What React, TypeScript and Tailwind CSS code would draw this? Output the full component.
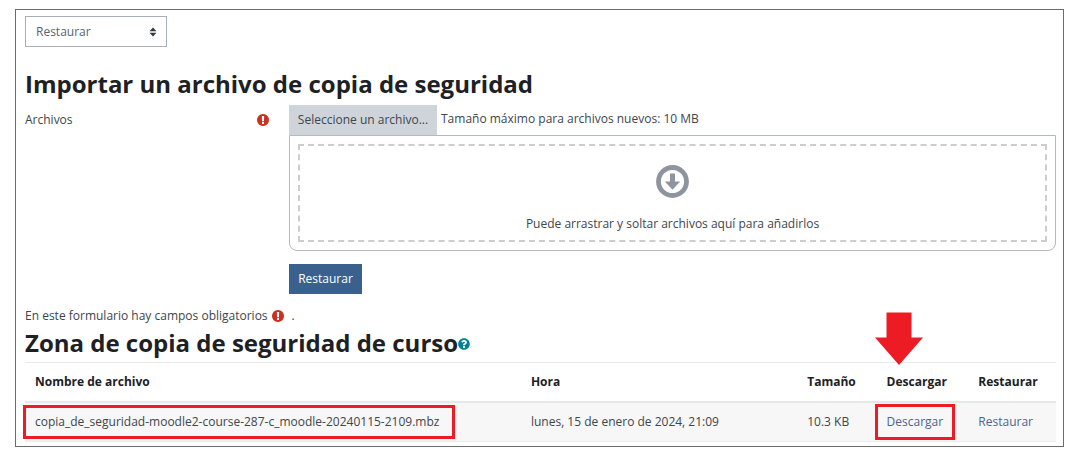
import { useState } from "react";
import { FaQuestionCircle } from "react-icons/fa";

interface BackupFile {
  name: string;
  time: string;
  size: string;
}

const files: BackupFile[] = [
  {
    name: "copia_de_seguridad-moodle2-course-287-c_moodle-20240115-2109.mbz",
    time: "lunes, 15 de enero de 2024, 21:09",
    size: "10.3 KB"
  }
];

function SortIcon() {
  return (
    <svg viewBox="0 0 8 10" className="pointer-events-none absolute right-2.5 top-1/2 h-2.5 w-2 -translate-y-1/2 fill-[#343a40]">
      <path d="M4 .5 7.500 4.200h-7zM4 9.500.5 5.800h7z" />
    </svg>
  );
}

function RequiredIcon() {
  return (
    <svg viewBox="0 128 1536 1536" className="size-3 shrink-0 fill-[#ca3120]">
      <path d="M768 128q209 0 385.5 103t279.5 279.5 103 385.5-103 385.5-279.5 279.5-385.5 103-385.5-103-279.5-279.5-103-385.5 103-385.5 279.5-279.5 385.5-103zm128 1247v-190q0-14-9-23.5t-22-9.5h-192q-13 0-23 10t-10 23v190q0 13 10 23t23 10h192q13 0 22-9.5t9-23.5zm-2-344l18-621q0-12-10-18-10-8-24-8h-220q-14 0-24 8-10 6-10 18l17 621q0 10 10 17.500t24 7.500h185q14 0 23.500-7.500t10.500-17.500z" />
    </svg>
  );
}

function DropIcon() {
  return (
    <svg viewBox="0 0 33 33" className="size-[33px]">
      <circle cx="16.5" cy="16.5" r="14" fill="none" stroke="#8f959e" strokeWidth="4.8" />
      <path d="M14 8.600h5v8h5.200L16.500 24.700l-7.700-8.100H14z" fill="#8f959e" />
    </svg>
  );
}

function ArrowDown() {
  return (
    <svg viewBox="0 0 48 53" className="absolute -top-[60px] -left-3 h-[53px] w-12 fill-[#ed1c24]">
      <path d="M11.500 0.500h25v25H48L24 53 0 25.500h11.500z" />
    </svg>
  );
}

export default function App() {
  const [action, setAction] = useState("restore");

  return (
    <div className="bg-white pt-[9px] pr-4 pb-[5px] pl-[15px] font-['Open_Sans',sans-serif] text-[12px] leading-5 text-[#40464c]">
      <main className="border border-[#6b6b6b] pt-1.5 pr-[7px] pb-1 pl-[9px]">
        <div className="relative w-[142px]">
          <select
            aria-label="Acción"
            value={action}
            onChange={(e) => setAction(e.target.value)}
            className="block h-[31px] w-full appearance-none border border-[#a9afb8] bg-white px-2.5 text-[#5c636a]"
          >
            <option value="restore">Restaurar</option>
          </select>
          <SortIcon />
        </div>

        <h2 className="mt-5 text-[24px] leading-[34px] font-bold text-[#1d2125]">
          Importar un archivo de copia de seguridad
        </h2>

        <form onSubmit={(e) => e.preventDefault()}>
          <div className="mt-1 flex">
            <div className="flex h-[30px] w-[264px] shrink-0 items-center justify-between pr-5">
              <label htmlFor="choose-file">Archivos</label>
              <RequiredIcon />
            </div>
            <div className="min-w-0 flex-1">
              <div className="flex items-center gap-1">
                <button id="choose-file" type="button" className="h-[30px] w-[148px] bg-[#ced4da] whitespace-nowrap">
                  Seleccione un archivo...
                </button>
                <span className="pb-0.5">Tamaño máximo para archivos nuevos: 10 MB</span>
              </div>
              <div className="rounded-b-lg border border-[#b4bac2] p-2">
                <div className="flex flex-col items-center gap-4 border-2 border-dashed border-[#cdcdcd] pt-[19px] pb-1.5">
                  <DropIcon />
                  <p>Puede arrastrar y soltar archivos aquí para añadirlos</p>
                </div>
              </div>
              <button type="submit" className="mt-[13px] h-[30px] w-[73px] bg-[#3a618e] text-white">
                Restaurar
              </button>
            </div>
          </div>
          <p className="mt-3 flex items-center gap-1">
            En este formulario hay campos obligatorios
            <RequiredIcon />
            <span className="pl-1">.</span>
          </p>
        </form>

        <h2 className="flex items-center pb-0.5 text-[24px] leading-[34px] font-bold text-[#1d2125]">
          Zona de copia de seguridad de curso
          <button type="button" aria-label="Ayuda" className="mt-0.5 text-[#008196]">
            <FaQuestionCircle size={12} />
          </button>
        </h2>

        <table className="w-full table-fixed border-y border-[#e9ecef] text-left">
          <colgroup>
            <col className="w-[48.1%]" />
            <col className="w-[26.8%]" />
            <col className="w-[7.7%]" />
            <col className="w-[8.9%]" />
            <col className="w-[8.5%]" />
          </colgroup>
          <thead>
            <tr className="border-b-2 border-[#e4e8eb] text-[#1d2125]">
              <th className="px-2.5 py-[9px]">Nombre de archivo</th>
              <th className="px-2.5">Hora</th>
              <th className="px-2.5">Tamaño</th>
              <th className="px-2.5">
                <div className="relative">
                  Descargar
                  <ArrowDown />
                </div>
              </th>
              <th className="px-2.5">Restaurar</th>
            </tr>
          </thead>
          <tbody>
            {files.map((file) => (
              <tr key={file.name} className="bg-[#f7f7f7]">
                <td className="px-2.5 py-[9px]">
                  <span className="relative inline-block whitespace-nowrap">
                    {file.name}
                    <span className="absolute -inset-y-[7px] -right-4 -left-3 border-3 border-[#ed1c24]" />
                  </span>
                </td>
                <td className="px-2.5">{file.time}</td>
                <td className="px-2.5">{file.size}</td>
                <td className="px-2.5">
                  <a href="#descargar" className="relative inline-block text-[#4d648d]">
                    Descargar
                    <span className="absolute -inset-x-3 -inset-y-2 border-3 border-[#ed1c24]" />
                  </a>
                </td>
                <td className="px-2.5">
                  <a href="#restaurar" className="text-[#4d648d]">Restaurar</a>
                </td>
              </tr>
            ))}
          </tbody>
        </table>
      </main>
    </div>
  );
}
